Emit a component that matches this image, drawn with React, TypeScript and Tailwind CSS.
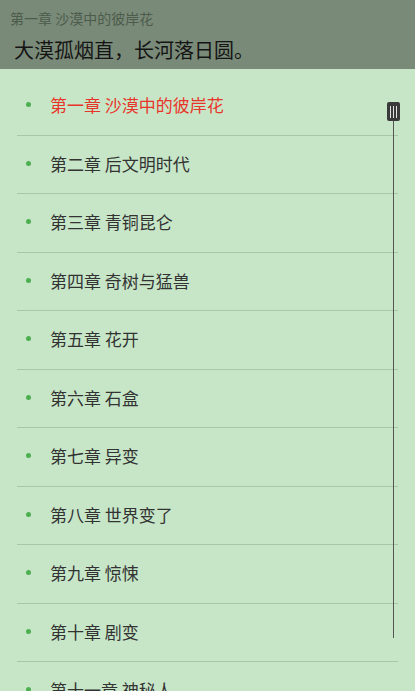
const chapters = [
  '第一章 沙漠中的彼岸花',
  '第二章 后文明时代',
  '第三章 青铜昆仑',
  '第四章 奇树与猛兽',
  '第五章 花开',
  '第六章 石盒',
  '第七章 异变',
  '第八章 世界变了',
  '第九章 惊悚',
  '第十章 剧变',
  '第十一章 神秘人',
];

export default function App() {
  return (
    <div
      className="relative h-[691px] w-[415px] overflow-hidden bg-[#c7e6c8]"
      style={{ fontFamily: '"Noto Sans CJK SC", "Noto Sans", sans-serif' }}
    >
      <header className="h-[69px] bg-[#7a8a78] pt-[8px]">
        <div className="pl-[10px] text-[14px] leading-[20px] text-[#4c5c4c]">第一章 沙漠中的彼岸花</div>
        <div className="mt-[10px] pl-[14px] text-[20px] leading-[24px] text-[#141414]">大漠孤烟直，长河落日圆。</div>
      </header>

      <ul className="mx-[17px] w-[381px] pt-[8px]">
        {chapters.map((title, i) => (
          <li
            key={title}
            className="flex h-[58.5px] items-center border-b border-[#a8c6a9] pb-[2px]"
          >
            <span className="ml-[9px] h-[5px] w-[5px] rounded-full bg-[#4caf50]" />
            <span
              className={
                i === 0
                  ? 'ml-[19px] text-[17px] text-[#e8352a]'
                  : 'ml-[19px] text-[17px] text-[#333333]'
              }
            >
              {title}
            </span>
          </li>
        ))}
      </ul>

      {/* fast scroll bar */}
      <div className="absolute left-[392.5px] top-[120px] h-[518px] w-[1.5px] bg-[#555]" />
      <div className="absolute left-[387px] top-[102px] flex h-[19px] w-[13px] items-center justify-center gap-[1.5px] rounded-[2px] bg-[#3a3a3a]">
        <span className="h-[12px] w-[1.5px] bg-[#e0e0e0]" />
        <span className="h-[12px] w-[1.5px] bg-[#e0e0e0]" />
        <span className="h-[12px] w-[1.5px] bg-[#e0e0e0]" />
      </div>
    </div>
  );
}
